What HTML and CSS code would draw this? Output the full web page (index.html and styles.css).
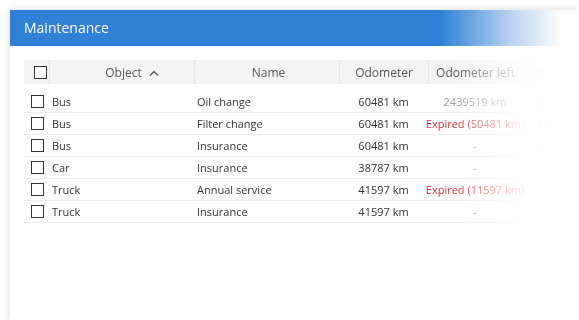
FILE: index.html
```html
<!DOCTYPE html>
<html lang="en">
<head>
    <meta charset="UTF-8">
    <meta name="viewport" content="width=device-width, initial-scale=1.0">
    <title>Maintenance</title>
    <link rel="stylesheet" href="styles.css">
</head>
<body>
    <div class="panel">
        <div class="panel-head">Maintenance</div>

        <div class="panel-body">
            <div class="grid-head">
                <div class="col col-check"><span class="box"></span></div>
                <div class="col col-object">
                    <span class="sort">Object
                        <svg class="caret" width="10" height="6" viewBox="0 0 10 6"><path d="M1 5.5 L5 1.5 L9 5.5" fill="none" stroke="#555" stroke-width="1.4"/></svg>
                    </span>
                </div>
                <div class="col col-name">Name</div>
                <div class="col col-odo">Odometer</div>
                <div class="col col-left">Odometer left</div>
                <div class="col col-extra">Due</div>
            </div>

            <div class="row">
                <div class="col col-check"><span class="box"></span></div>
                <div class="col col-object">Bus</div>
                <div class="col col-name">Oil change</div>
                <div class="col col-odo">60481 km</div>
                <div class="col col-left muted">2439519 km</div>
                <div class="col col-extra muted">250</div>
            </div>
            <div class="row">
                <div class="col col-check"><span class="box"></span></div>
                <div class="col col-object">Bus</div>
                <div class="col col-name">Filter change</div>
                <div class="col col-odo">60481 km</div>
                <div class="col col-left expired">Expired (50481 km)</div>
                <div class="col col-extra muted">120</div>
            </div>
            <div class="row">
                <div class="col col-check"><span class="box"></span></div>
                <div class="col col-object">Bus</div>
                <div class="col col-name">Insurance</div>
                <div class="col col-odo">60481 km</div>
                <div class="col col-left muted">-</div>
                <div class="col col-extra muted">300</div>
            </div>
            <div class="row">
                <div class="col col-check"><span class="box"></span></div>
                <div class="col col-object">Car</div>
                <div class="col col-name">Insurance</div>
                <div class="col col-odo">38787 km</div>
                <div class="col col-left muted">-</div>
                <div class="col col-extra muted"></div>
            </div>
            <div class="row">
                <div class="col col-check"><span class="box"></span></div>
                <div class="col col-object">Truck</div>
                <div class="col col-name">Annual service</div>
                <div class="col col-odo">41597 km</div>
                <div class="col col-left expired">Expired (11597 km)</div>
                <div class="col col-extra muted"></div>
            </div>
            <div class="row">
                <div class="col col-check"><span class="box"></span></div>
                <div class="col col-object">Truck</div>
                <div class="col col-name">Insurance</div>
                <div class="col col-odo">41597 km</div>
                <div class="col col-left muted">-</div>
                <div class="col col-extra muted"></div>
            </div>
        </div>
    </div>
</body>
</html>
```

FILE: styles.css
```css
body {
    margin: 0;
    padding: 10px 0 0 10px;
    background: #fff;
    font-family: 'Open Sans', 'Noto Sans', sans-serif;
    color: #333;
    overflow: hidden;
    height: 310px;
}

.panel {
    width: 569px;
    height: 310px;
    background: #fff;
    overflow: hidden;
    box-shadow: 0 0 8px rgba(0, 0, 0, 0.16);
}

/* blue title bar, fading out to the right */
.panel-head {
    height: 36px;
    line-height: 36px;
    padding-left: 14px;
    background: #2f80d6;
    color: #fff;
    font-size: 14px;
    -webkit-mask-image: linear-gradient(to right, #000 430px, rgba(0, 0, 0, 0.35) 500px, transparent 552px);
    mask-image: linear-gradient(to right, #000 430px, rgba(0, 0, 0, 0.35) 500px, transparent 552px);
}

.panel-body {
    padding: 14px 0 0 14px;
    -webkit-mask-image: linear-gradient(to right, #000 445px, rgba(0, 0, 0, 0.45) 480px, rgba(0, 0, 0, 0.12) 510px, transparent 540px);
    mask-image: linear-gradient(to right, #000 445px, rgba(0, 0, 0, 0.45) 480px, rgba(0, 0, 0, 0.12) 510px, transparent 540px);
}

.grid-head {
    display: flex;
    width: 560px;
    height: 24px;
    background: #f4f4f4;
    font-size: 12px;
    color: #555;
    margin-bottom: 7px;
}

.grid-head .col {
    border-left: 1px solid #e3e3e3;
    justify-content: center;
}

.grid-head .col-check {
    border-left: none;
}

.row {
    display: flex;
    width: 560px;
    height: 21px;
    border-bottom: 1px solid #ececec;
    font-size: 11px;
}

.col {
    display: flex;
    flex-shrink: 0;
    align-items: center;
    box-sizing: border-box;
    white-space: nowrap;
}

.col-check {
    width: 25px;
    padding-left: 7px;
}

.col-object {
    width: 145px;
    padding-left: 3px;
}

.col-name {
    width: 145px;
    padding-left: 3px;
}

.col-odo {
    width: 89px;
    justify-content: center;
}

.col-left {
    width: 94px;
    justify-content: center;
}

.col-extra {
    width: 50px;
    justify-content: center;
}

.sort {
    position: relative;
}

.caret {
    position: absolute;
    left: 100%;
    top: 6px;
    margin-left: 7px;
}

.box {
    display: block;
    width: 13px;
    height: 13px;
    box-sizing: border-box;
    border: 1px solid #333;
    background: #fff;
}

.muted {
    color: #999;
}

.expired {
    color: #d9303c;
}
```
